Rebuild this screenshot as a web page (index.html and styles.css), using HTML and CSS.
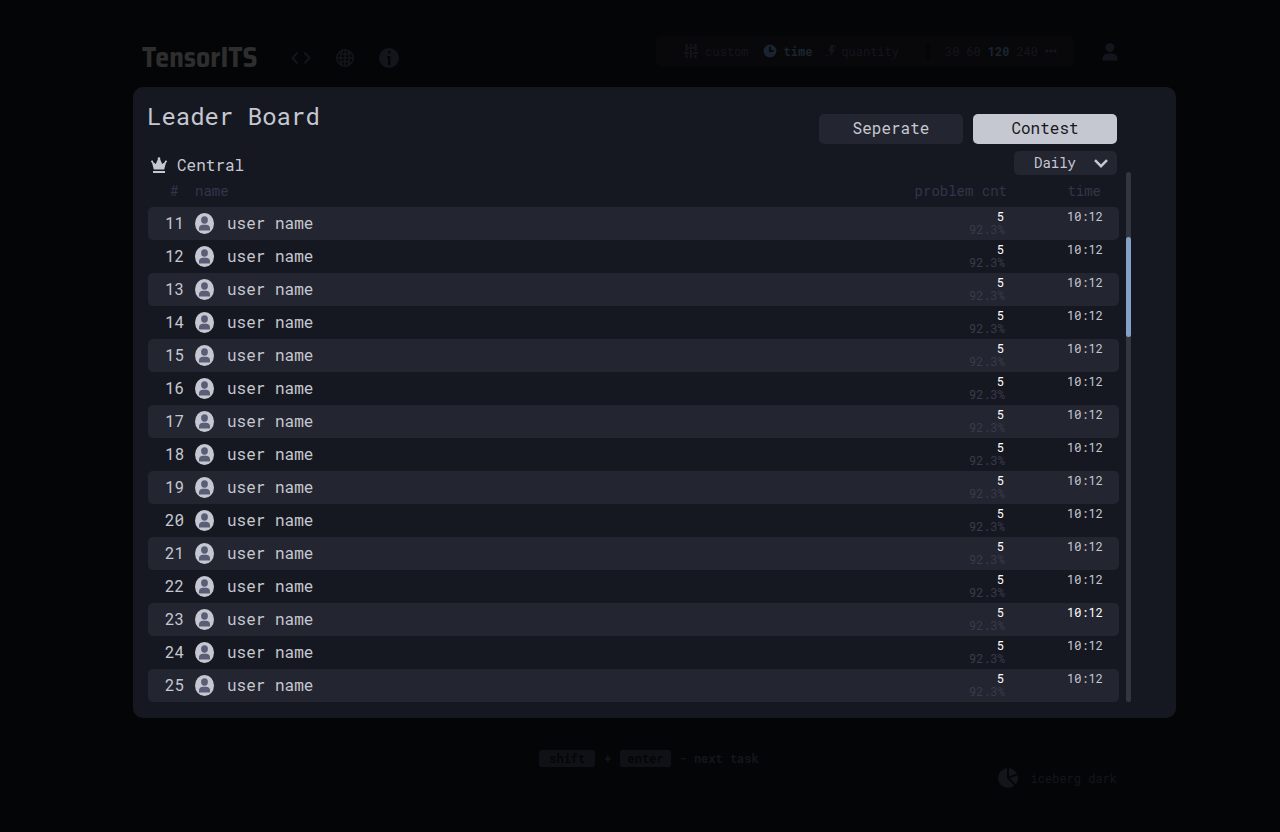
FILE: index.html
```html
<!DOCTYPE html>
<html lang="en">
<head>
<meta charset="utf-8">
<title>TensorITS</title>
<link rel="stylesheet" href="styles.css">
</head>
<body>
<header class="topbar">
  <div class="brand">TensorITS</div>
  <nav class="nav">
    <a href="#code" aria-label="Code"><svg width="20" height="20" viewBox="0 0 20 20" fill="none" stroke="currentColor" stroke-width="2"><path d="M6.500 4.500 1.500 10l5 5.500M13.500 4.500l5 5.500-5 5.500"/></svg></a>
    <a href="#leaders" aria-label="Leader board"><svg width="20" height="20" viewBox="0 0 20 20" fill="none" stroke="currentColor" stroke-width="1.500"><circle cx="10" cy="10" r="8.200"/><path d="M10 2v16M2 10h16M4 4.500c3.500 3 8.500 3 12 0M4 15.500c3.500-3 8.500-3 12 0M7.500 2.500c-3 5-3 10 0 15M12.500 2.500c3 5 3 10 0 15"/></svg></a>
    <a href="#info" aria-label="Info"><svg width="20" height="20" viewBox="0 0 20 20"><circle cx="10" cy="10" r="10" fill="currentColor"/><path class="cut" d="M9 3h2.500v2.500H9zM8 8h3.500v9H9V10H8z"/></svg></a>
  </nav>
  <div class="config">
    <div class="modes">
      <button class="mode"><svg width="14" height="14" viewBox="0 0 14 14" fill="none" stroke="currentColor" stroke-width="2"><path d="M2.500 0v7M2.500 11v3M7 0v2M7 6v8M11.500 0v7M11.500 11v3M0 9h5M4.500 4h5M9 9h5"/></svg>custom</button>
      <button class="mode active"><svg width="14" height="14" viewBox="0 0 14 14"><circle cx="7" cy="7" r="6.500" fill="currentColor"/><path class="cut-line" d="M7 2.500V7h3.500"/></svg>time</button>
      <button class="mode bolt"><svg width="10" height="14" viewBox="0 0 10 14" fill="currentColor"><path d="M4.500 1h4L6.500 5H9L4 13l1-5.500H2.500zM0 11h1.500v1.500H0zM9 2h1v1.500H9z"/></svg>quantity</button>
    </div>
    <div class="amounts">
      <button>30</button><button>60</button><button class="active">120</button><button>240</button><button aria-label="Other"><svg width="12" height="4" viewBox="0 0 12 4" fill="currentColor"><circle cx="2" cy="2" r="1.700"/><circle cx="6" cy="2" r="1.700"/><circle cx="10" cy="2" r="1.700"/></svg></button>
    </div>
  </div>
  <a class="account" href="#account" aria-label="Account"><svg width="16" height="18" viewBox="0 0 16 18" fill="currentColor"><circle cx="8" cy="4.500" r="4.500"/><path d="M0.500 17.500v-2a5.500 5.500 0 0 1 5-5h5a5.500 5.500 0 0 1 5 5v2z"/></svg></a>
</header>

<main class="panel">
  <div class="content">
    <div class="title-row">
      <h1>Leader Board</h1>
      <div class="tabs">
        <button class="tab">Seperate</button>
        <button class="tab selected">Contest</button>
      </div>
    </div>
    <div class="filter-row">
      <h2><svg width="16" height="16" viewBox="0 0 16 16" fill="currentColor"><path d="M0.600 4 4.800 7 7 2h2l2.200 5 4.200-3L13.200 12.500H2.800z"/><circle cx="8" cy="1.500" r="1.300"/><circle cx="1.100" cy="4.500" r="1.100"/><circle cx="14.900" cy="4.500" r="1.100"/><path d="M2 14h12v2H2z"/></svg>Central</h2>
      <div class="period">
        <select aria-label="Period"><option>Daily</option><option>Weekly</option></select>
        <svg class="chevron" width="14" height="9" viewBox="0 0 14 9" fill="none" stroke="currentColor" stroke-width="2.500"><path d="M1 1.200l6 6 6-6"/></svg>
      </div>
    </div>
    <table class="board">
      <thead><tr><th class="rank">#</th><th class="user" colspan="2">name</th><th class="count">problem cnt</th><th class="time">time</th></tr></thead>
      <tbody id="rows"></tbody>
    </table>
  </div>
  <div class="track"><div class="thumb"></div></div>
</main>

<footer>
  <div class="hint"><kbd>shift</kbd><span>+</span><kbd class="enter">enter</kbd><span>- next task</span></div>
  <button class="theme"><svg width="20" height="20" viewBox="0 0 20 20"><circle cx="10" cy="10" r="10" fill="currentColor"/><path d="M10 0v10l7.500 7.500M10 10l10-4" fill="none" stroke="#040507" stroke-width="1.800"/></svg>iceberg dark</button>
</footer>
<script src="board.js"></script>
</body>
</html>
```
FILE: styles.css
```css
* { box-sizing: border-box; }

body {
  margin: 0;
  padding: 36px 104px 40px 133px;
  background: #040507;
  color: #c6c8d1;
  font-family: "Roboto Mono", "DejaVu Sans Mono", monospace;
  font-size: 16px;
}

button, select {
  margin: 0;
  padding: 0;
  border: 0;
  background: none;
  color: inherit;
  font: inherit;
}

svg { display: block; flex: none; }

.topbar {
  display: flex;
  align-items: flex-start;
  height: 51px;
  padding: 0 58px 0 9px;
  color: #14151c;
}

.brand {
  margin-top: 5px;
  color: #2e2e2e;
  font: 700 28px/32px "Saira Semi Condensed", "Saira SemiCondensed", Saira, Roboto, sans-serif;
}

.nav { display: flex; gap: 24px; margin: 12px auto 0 33px; }
.nav a, .account { color: inherit; }
.cut { fill: #040507; }
.cut-line { fill: none; stroke: #08090b; stroke-width: 2; }

.config {
  display: flex;
  align-items: center;
  height: 31px;
  padding-bottom: 2px;
  border-radius: 5px;
  background: #08080a;
  font-size: 12px;
}

.modes {
  display: flex;
  gap: 14px;
  padding: 0 27px 0 28px;
  border-right: 4px solid #040507;
}

.mode { display: flex; align-items: center; gap: 7px; }
.mode.bolt { gap: 5px; }
.active { color: #1a2430; font-weight: 700; }
.amounts { display: flex; align-items: center; gap: 7px; padding: 0 17px 0 15px; }
.account { margin: 7px 0 0 28px; }

.panel {
  display: flex;
  gap: 7px;
  padding: 14px 45px 16px 14px;
  border-radius: 10px;
  background: #161821;
}

.content { flex: 1; }

.title-row {
  display: flex;
  align-items: flex-end;
  justify-content: space-between;
  height: 43px;
  padding-right: 2px;
}

h1 { margin: 0; align-self: flex-start; font-size: 24px; font-weight: 400; line-height: 30px; }

.tabs { display: flex; gap: 10px; }
.tab { width: 144px; height: 30px; padding-bottom: 3px; border-radius: 5px; background: #232530; }
.tab.selected { background: #c6c8d1; color: #161821; }

.filter-row {
  display: flex;
  align-items: flex-start;
  justify-content: space-between;
  margin-top: 7px;
  padding: 0 2px 0 4px;
}

h2 {
  display: flex;
  align-items: center;
  gap: 10px;
  margin: 3px 0 0;
  font-size: 16px;
  font-weight: 400;
  line-height: 22px;
}

.period { position: relative; }

.period select {
  appearance: none;
  display: block;
  width: 103px;
  height: 24px;
  padding: 0 20px 2px;
  border-radius: 5px;
  background: #232530;
  font-size: 14px;
}

.chevron { position: absolute; right: 9px; top: 8px; pointer-events: none; }

.board { width: calc(100% - 1px); margin: 3px 0 0 1px; border-collapse: collapse; }
.board th, .board td { padding: 0; text-align: left; font-weight: 400; }
.board th { height: 28px; padding-bottom: 4px; color: #32354a; font-size: 14px; line-height: 16px; }
.board td { height: 33px; }
.board td.rank, .board td.user { padding-bottom: 2px; }
.board .rank { width: 47px; padding-left: 17px; }
.board th.rank { padding-left: 22px; }
.board .face { width: 32px; }
.board .count { width: 160px; padding-right: 2px; text-align: right; }
.board th.count { padding-right: 0; }
.board .time { width: 112px; padding-right: 16px; text-align: right; font-size: 12px; }
.board th.time { padding-right: 18px; font-size: 14px; }
.board td.count, .board td.time { padding-top: 3px; vertical-align: top; font-size: 12px; line-height: 13px; }
.board tbody tr:nth-child(odd) td { background: #232530; }
.board td:first-child { border-radius: 5px 0 0 5px; }
.board td:last-child { border-radius: 0 5px 5px 0; }
.solved { display: block; padding-right: 1px; color: #ffffff; }
.accuracy { display: block; color: #393b4e; }
.board td.highlight { color: #ffffff; }

.track { width: 5px; margin-top: 71px; padding-top: 65px; border-radius: 3px; background: #34363f; }
.thumb { height: 100px; border-radius: 3px; background: #84a0c6; }

footer { padding: 32px 59px 0 0; color: #14151c; font-size: 12px; }

.hint {
  display: flex;
  align-items: center;
  justify-content: center;
  gap: 9px;
  margin-right: -59px;
  padding-right: 11px;
  font-weight: 700;
  line-height: 17px;
}

kbd { padding: 0 10px; border-radius: 2px; background: #101117; color: #040507; font: inherit; }
kbd.enter { padding: 0 7px; }

.theme { display: flex; align-items: center; gap: 13px; margin: 1px 0 0 auto; }
```
FILE: board.js
```javascript
const body = document.getElementById("rows");
const avatar = '<svg width="19" height="21" viewBox="0 0 19 21"><ellipse cx="9.500" cy="10.500" rx="9.500" ry="10.500" fill="#c6c8d1"/><ellipse cx="9.500" cy="7" rx="3.400" ry="3.700" fill="#595e76"/><path d="M4 17.500v-1.500a4 4 0 0 1 3.500-4.200h4a4 4 0 0 1 3.500 4.200v1.500z" fill="#595e76"/></svg>';
for (let rank = 11; rank <= 25; rank++) {
  const mark = rank === 23 ? " highlight" : "";
  body.insertAdjacentHTML("beforeend",
    `<tr><td class="rank">${rank}</td><td class="face">${avatar}</td><td class="user">user name</td>` +
    `<td class="count"><span class="solved">5</span><span class="accuracy">92.3%</span></td>` +
    `<td class="time${mark}">10:12</td></tr>`);
}
```
